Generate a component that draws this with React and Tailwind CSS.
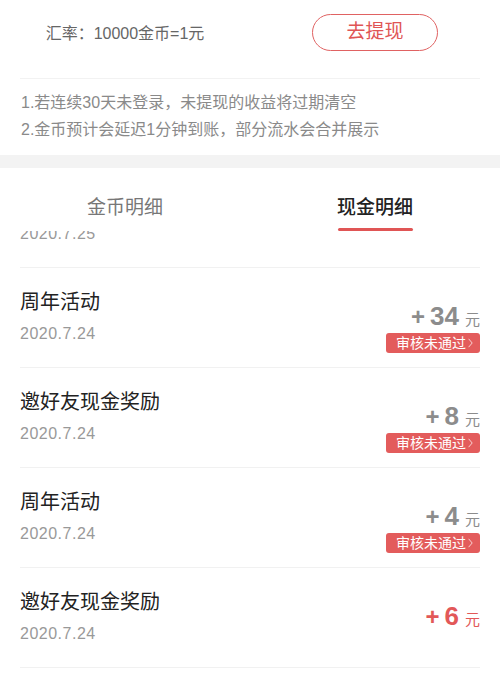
import React from 'react';

const font = "font-['Liberation_Sans','Noto_Sans_CJK_SC',sans-serif]";

const records = [
  { title: '邀好友现金奖励', date: '2020.7.25', amount: 2, status: null },
  { title: '周年活动', date: '2020.7.24', amount: 34, status: '审核未通过' },
  { title: '邀好友现金奖励', date: '2020.7.24', amount: 8, status: '审核未通过' },
  { title: '周年活动', date: '2020.7.24', amount: 4, status: '审核未通过' },
  { title: '邀好友现金奖励', date: '2020.7.24', amount: 6, status: null },
  { title: '周年活动', date: '2020.7.23', amount: 5, status: null },
];

function Chevron() {
  return (
    <svg width="5" height="10" viewBox="0 0 5 10" className="ml-[2px]">
      <polyline points="0.6,0.8 4.2,5 0.6,9.2" fill="none" stroke="white" strokeWidth="0.9" strokeOpacity="0.8" />
    </svg>
  );
}

function RecordRow({ item }) {
  const failed = !!item.status;
  return (
    <div className="mx-5 h-[100px] flex justify-between border-b border-[#f1f1f1]">
      <div className="pt-[20px]">
        <div className="text-[20px] leading-[28px] text-[#222]">{item.title}</div>
        <div className="mt-[7px] text-[16px] leading-[22px] tracking-[0.5px] text-[#999]">{item.date}</div>
      </div>
      <div className="pt-[35px] flex flex-col items-end">
        <div className={`flex items-baseline leading-none ${failed ? 'text-[#8c8c8c]' : 'text-[#e25858]'}`}>
          <span className="text-[24px] font-bold">+</span>
          <span className="ml-[5px] text-[26px] font-bold">{item.amount}</span>
          <span className="ml-[6px] text-[15px]">元</span>
        </div>
        {failed && (
          <div className="mt-[4px] h-[20px] w-[94px] rounded-[3px] bg-[#e35c5c] flex items-center pl-[10px] text-[14px] leading-none text-white">
            {item.status}
            <Chevron />
          </div>
        )}
      </div>
    </div>
  );
}

export default function App() {
  return (
    <div className={`w-[500px] min-h-screen bg-white ${font}`}>
      {/* 汇率 + 提现 */}
      <div className="grid grid-cols-2 items-center pt-[14px] pb-[27px]">
        <div className="text-center text-[16px] text-[#666] pt-[3px]">汇率：10000金币=1元</div>
        <div className="flex justify-center">
          <button className="w-[126px] h-[37px] rounded-full border-[1.5px] border-[#e06262] text-[19px] text-[#e05555]">
            去提现
          </button>
        </div>
      </div>

      <div className="mx-5 border-t border-[#f2f2f2]"></div>

      <div className="px-[21px] pt-[10px] pb-[12px] text-[16px] leading-[27px] text-[#8a8a8a]">
        <p>1.若连续30天未登录，未提现的收益将过期清空</p>
        <p>2.金币预计会延迟1分钟到账，部分流水会合并展示</p>
      </div>

      <div className="h-[13px] bg-[#f3f3f3]"></div>

      <div className="relative">
        <div>
          {records.map((item, i) => (
            <RecordRow key={i} item={item} />
          ))}
        </div>

        {/* tab bar sits over the scrolled list */}
        <div className="absolute top-0 inset-x-0 h-[63px] bg-white grid grid-cols-2">
          <div className="flex flex-col items-center pt-[27px]">
            <span className="text-[19px] leading-[26px] text-[#777]">金币明细</span>
          </div>
          <div className="flex flex-col items-center pt-[27px]">
            <span className="text-[19px] leading-[26px] text-[#222] font-medium">现金明细</span>
            <span className="mt-[7px] h-[3px] w-[75px] rounded-full bg-[#e05555]"></span>
          </div>
        </div>
      </div>
    </div>
  );
}
